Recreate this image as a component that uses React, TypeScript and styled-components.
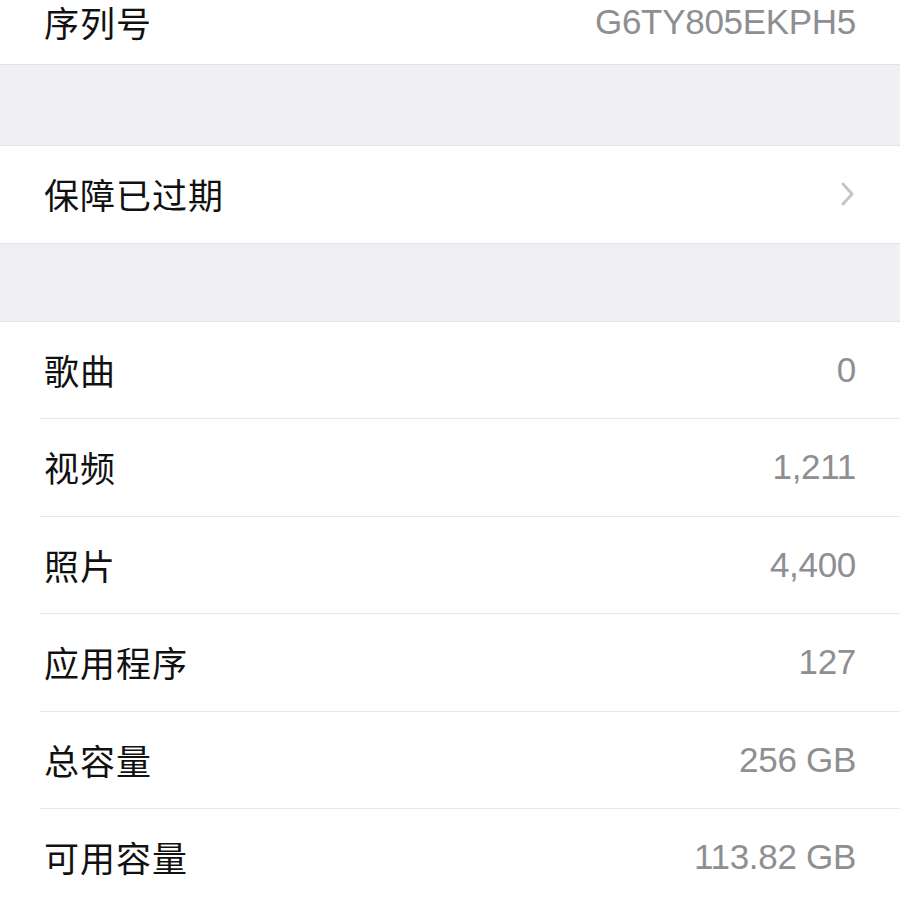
import React from "react";
import styled, { createGlobalStyle } from "styled-components";

const GlobalStyle = createGlobalStyle`
    html, body {
        margin: 0;
        padding: 0;
        background: #efeff4;
        overflow: hidden;
    }
    body {
        font-family: "Liberation Sans", "Noto Sans CJK SC", sans-serif;
        -webkit-font-smoothing: antialiased;
    }
`;

const Screen = styled.div`
    width: 900px;
    height: 900px;
    overflow: hidden;
    background: #efeff4;
`;

const Group = styled.section<{ $gap: number }>`
    background: #fff;
    margin-top: ${(p) => p.$gap}px;
    border-top: ${(p) => (p.$gap ? "1px solid #e2e2e7" : "none")};
    border-bottom: 1px solid #e2e2e7;
`;

// the list is scrolled, so the first row is only partly shown
const Row = styled.div<{ $clipped?: boolean }>`
    display: flex;
    align-items: center;
    justify-content: space-between;
    height: ${(p) => (p.$clipped ? "42px" : "96.5px")};
    padding-top: ${(p) => (p.$clipped ? "1px" : "0")};
    padding-bottom: ${(p) => (p.$clipped ? "21px" : "0")};
    margin-left: 40px;
    padding-left: 4px;
    padding-right: 44px;
    border-bottom: 1px solid #e8e8ec;

    &:last-child {
        border-bottom: none;
    }
`;

const Label = styled.span`
    font-family: "Noto Sans CJK SC", "Liberation Sans", sans-serif;
    font-size: 35px;
    line-height: 40px;
    color: #111;
    letter-spacing: 1px;
`;

const Value = styled.span`
    font-size: 35px;
    line-height: 40px;
    color: #8e8e93;
    letter-spacing: -0.3px;
`;

const Chevron = () => (
    <svg width="16" height="28" viewBox="0 0 16 28">
        <path
            d="M3 4 L12 14 L3 24"
            fill="none"
            stroke="#c4c4c9"
            strokeWidth="3"
            strokeLinecap="round"
            strokeLinejoin="round"
        />
    </svg>
);

type Item = { label: string; value: string };

const stats: Item[] = [
    { label: "歌曲", value: "0" },
    { label: "视频", value: "1,211" },
    { label: "照片", value: "4,400" },
    { label: "应用程序", value: "127" },
    { label: "总容量", value: "256 GB" },
    { label: "可用容量", value: "113.82 GB" },
];

const App = () => (
    <>
        <GlobalStyle />
        <Screen>
            <Group $gap={0}>
                <Row $clipped>
                    <Label>序列号</Label>
                    <Value>G6TY805EKPH5</Value>
                </Row>
            </Group>

            <Group $gap={80}>
                <Row>
                    <Label>保障已过期</Label>
                    <Chevron />
                </Row>
            </Group>

            <Group $gap={77}>
                {stats.map((s) => (
                    <Row key={s.label}>
                        <Label>{s.label}</Label>
                        <Value>{s.value}</Value>
                    </Row>
                ))}
            </Group>
        </Screen>
    </>
);

export default App;
